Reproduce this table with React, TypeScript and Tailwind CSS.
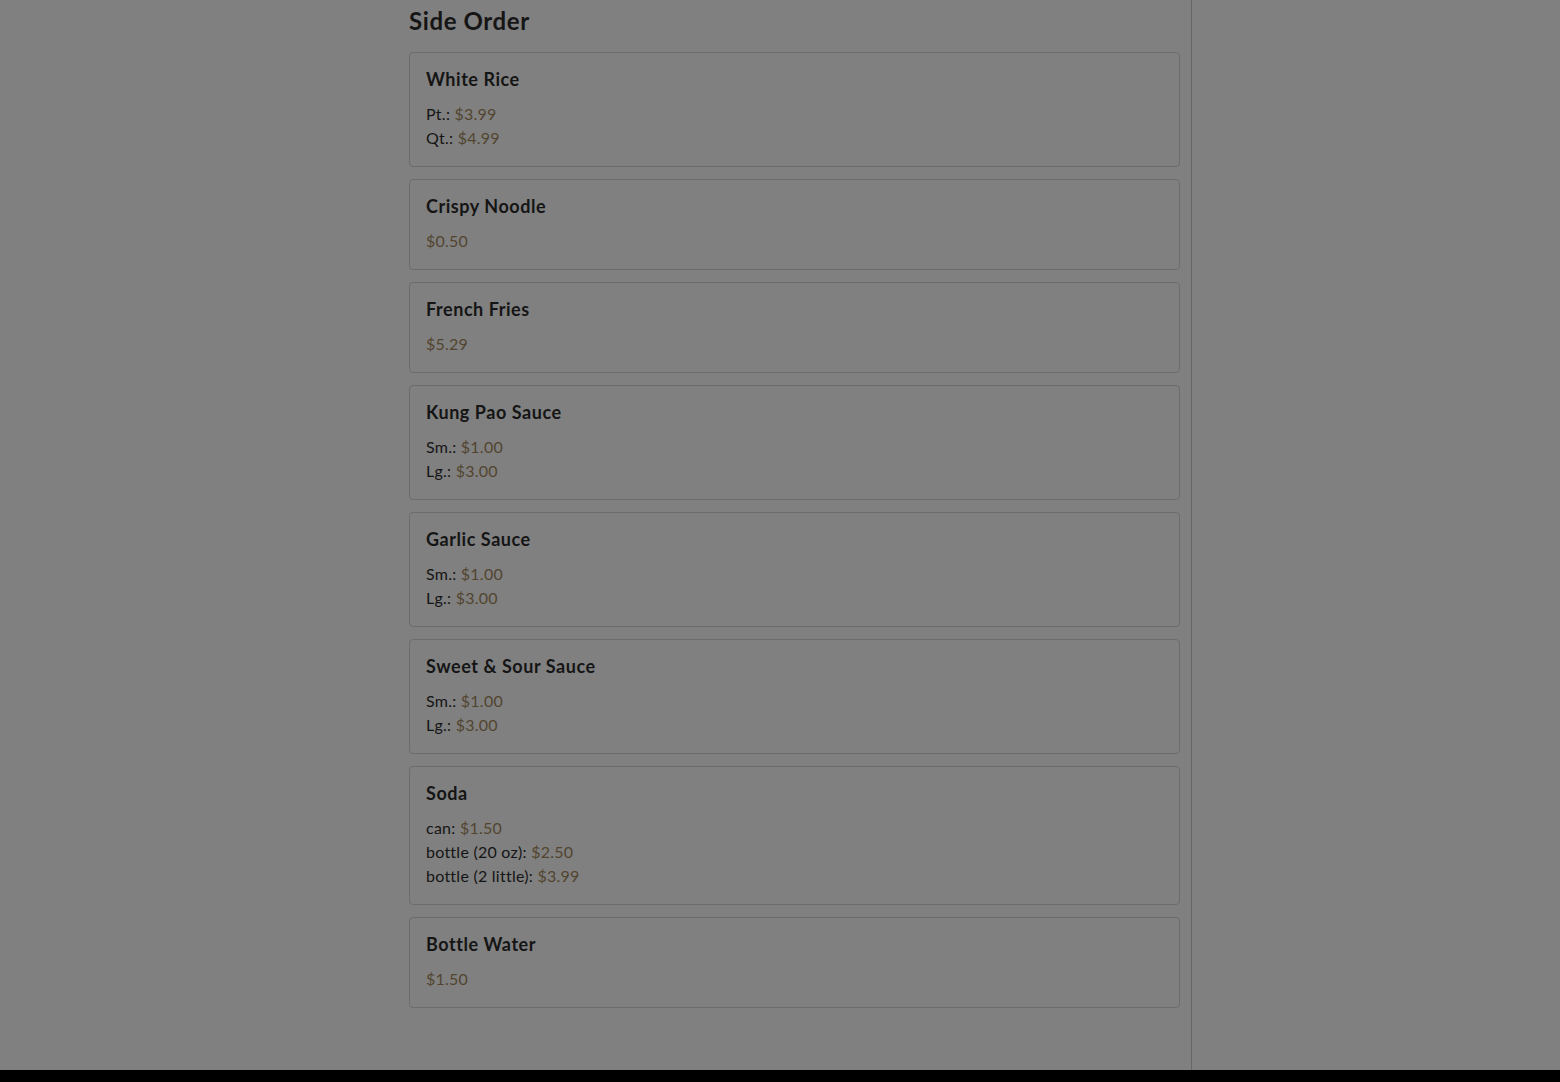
import React from "react";

type Item = { name: string; prices: { label?: string; price: string }[] };

const items: Item[] = [
  { name: "White Rice", prices: [{ label: "Pt.", price: "$3.99" }, { label: "Qt.", price: "$4.99" }] },
  { name: "Crispy Noodle", prices: [{ price: "$0.50" }] },
  { name: "French Fries", prices: [{ price: "$5.29" }] },
  { name: "Kung Pao Sauce", prices: [{ label: "Sm.", price: "$1.00" }, { label: "Lg.", price: "$3.00" }] },
  { name: "Garlic Sauce", prices: [{ label: "Sm.", price: "$1.00" }, { label: "Lg.", price: "$3.00" }] },
  { name: "Sweet & Sour Sauce", prices: [{ label: "Sm.", price: "$1.00" }, { label: "Lg.", price: "$3.00" }] },
  {
    name: "Soda",
    prices: [
      { label: "can", price: "$1.50" },
      { label: "bottle (20 oz)", price: "$2.50" },
      { label: "bottle (2 little)", price: "$3.99" },
    ],
  },
  { name: "Bottle Water", prices: [{ price: "$1.50" }] },
];

export default function App() {
  return (
    <div
      className="w-[1560px] h-[1082px] bg-[#808080] flex flex-col overflow-hidden text-[#151515]"
      style={{ fontFamily: "Lato, 'Noto Sans', sans-serif" }}
    >
      <div className="flex flex-1 min-h-0">
        <div className="w-[1192px] border-r border-[#666666] pl-[409px] pr-[11px] pt-[5px]">
          <h2 className="text-2xl leading-8 font-bold tracking-[0.6px] mb-[15px]">Side Order</h2>
          <div className="flex flex-col gap-3">
            {items.map((it) => (
              <div key={it.name} className="border border-[#6c6c6c] rounded-[4px] p-4">
                <div className="text-lg leading-[21px] font-bold tracking-[0.55px] mb-3">{it.name}</div>
                <div className="text-base leading-6 tracking-[0.25px]">
                  {it.prices.map((p, i) => (
                    <div key={i}>
                      {p.label ? <span>{p.label}: </span> : null}
                      <span className="text-[#52452f]">{p.price}</span>
                    </div>
                  ))}
                </div>
              </div>
            ))}
          </div>
        </div>
        <div className="flex-1" />
      </div>
      <div className="h-[12px] bg-black shrink-0" />
    </div>
  );
}
